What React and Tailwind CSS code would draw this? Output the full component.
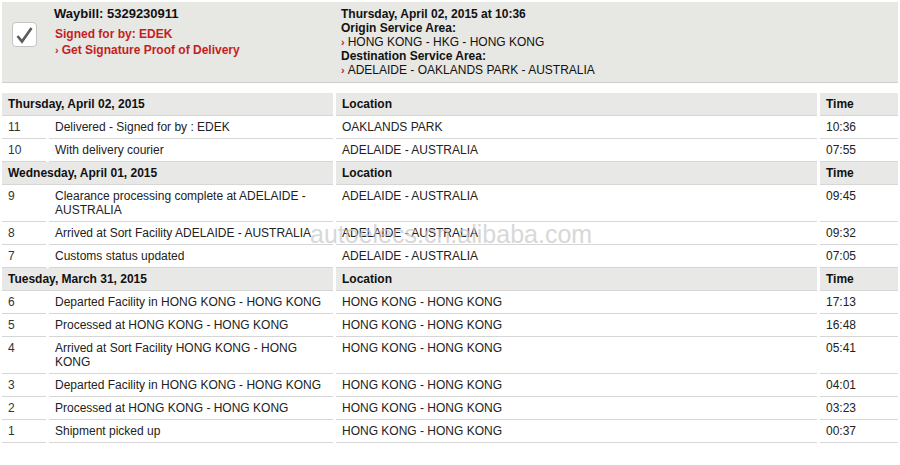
import React from "react";

const groups = [
  {
    date: "Thursday, April 02, 2015",
    rows: [
      ["11", "Delivered - Signed for by : EDEK", "OAKLANDS PARK", "10:36"],
      ["10", "With delivery courier", "ADELAIDE - AUSTRALIA", "07:55"],
    ],
  },
  {
    date: "Wednesday, April 01, 2015",
    rows: [
      ["9", "Clearance processing complete at ADELAIDE - AUSTRALIA", "ADELAIDE - AUSTRALIA", "09:45"],
      ["8", "Arrived at Sort Facility ADELAIDE - AUSTRALIA", "ADELAIDE - AUSTRALIA", "09:32"],
      ["7", "Customs status updated", "ADELAIDE - AUSTRALIA", "07:05"],
    ],
  },
  {
    date: "Tuesday, March 31, 2015",
    rows: [
      ["6", "Departed Facility in HONG KONG - HONG KONG", "HONG KONG - HONG KONG", "17:13"],
      ["5", "Processed at HONG KONG - HONG KONG", "HONG KONG - HONG KONG", "16:48"],
      ["4", "Arrived at Sort Facility HONG KONG - HONG KONG", "HONG KONG - HONG KONG", "05:41"],
      ["3", "Departed Facility in HONG KONG - HONG KONG", "HONG KONG - HONG KONG", "04:01"],
      ["2", "Processed at HONG KONG - HONG KONG", "HONG KONG - HONG KONG", "03:23"],
      ["1", "Shipment picked up", "HONG KONG - HONG KONG", "00:37"],
    ],
  },
];

const gridCls = "grid grid-cols-[44px_284px_481px_78px] gap-x-[3px]";
const cell = "px-[6px] pt-[4px] pb-[4px] leading-[14px] border-b border-[#d6d6d6]";

function Chevron() {
  return <span className="text-[#c41e22] font-bold mr-[3px] text-[11px]">›</span>;
}

export default function App() {
  return (
    <div
      className="relative w-[900px] h-[465px] bg-white text-[12px] text-[#222] overflow-hidden"
      style={{ fontFamily: '"Liberation Sans", Arial, sans-serif' }}
    >
      <div className="mx-[2px] mt-[2px] h-[81px] bg-[#e7e7e4] border-b border-[#cfcfcc] flex">
        <div className="w-[52px] shrink-0 pl-[10px] pt-[20px]">
          <div className="w-[25px] h-[25px] rounded-[4px] bg-white border border-[#c4c4c4] flex items-center justify-center">
            <svg width="19" height="18" viewBox="0 0 19 18">
              <path d="M2.5 10 L7 15.5 L16.5 2" fill="none" stroke="#5a5a5a" strokeWidth="2.6" strokeLinejoin="miter" strokeLinecap="butt" />
            </svg>
          </div>
        </div>
        <div className="w-[287px] shrink-0 pt-[4px]">
          <div className="text-[13px] font-bold leading-[16px] text-[#111]">Waybill: 5329230911</div>
          <div className="mt-[4px] leading-[16px] font-bold text-[#c41e22] pl-[1px]">Signed for by: EDEK</div>
          <div className="leading-[16px] font-bold text-[#c41e22] pl-[1px]">
            <Chevron />Get Signature Proof of Delivery
          </div>
        </div>
        <div className="pt-[5px] leading-[14px] text-[#111]">
          <div className="font-bold">Thursday, April 02, 2015 at 10:36</div>
          <div className="font-bold">Origin Service Area:</div>
          <div><Chevron />HONG KONG - HKG - HONG KONG</div>
          <div className="font-bold">Destination Service Area:</div>
          <div><Chevron />ADELAIDE - OAKLANDS PARK - AUSTRALIA</div>
        </div>
      </div>

      <div className="mt-[10px] ml-[2px]">
        {groups.map((g) => (
          <div key={g.date}>
            <div className={gridCls}>
              <div className={`${cell} col-span-2 bg-[#e8e8e6] font-bold text-[#111]`}>{g.date}</div>
              <div className={`${cell} bg-[#e8e8e6] font-bold text-[#111]`}>Location</div>
              <div className={`${cell} bg-[#e8e8e6] font-bold text-[#111]`}>Time</div>
            </div>
            {g.rows.map((r) => (
              <div key={r[0]} className={gridCls}>
                <div className={`${cell} text-[#333]`}>{r[0]}</div>
                <div className={`${cell} text-[#222]`}>{r[1]}</div>
                <div className={`${cell} text-[#222]`}>{r[2]}</div>
                <div className={`${cell} text-[#222]`}>{r[3]}</div>
              </div>
            ))}
          </div>
        ))}
      </div>

      <div className="absolute left-[310px] top-[220px] text-[25px] leading-[29px] text-[#c8c8c8] opacity-70 pointer-events-none">
        autoelecs.cn.alibaba.com
      </div>
    </div>
  );
}
